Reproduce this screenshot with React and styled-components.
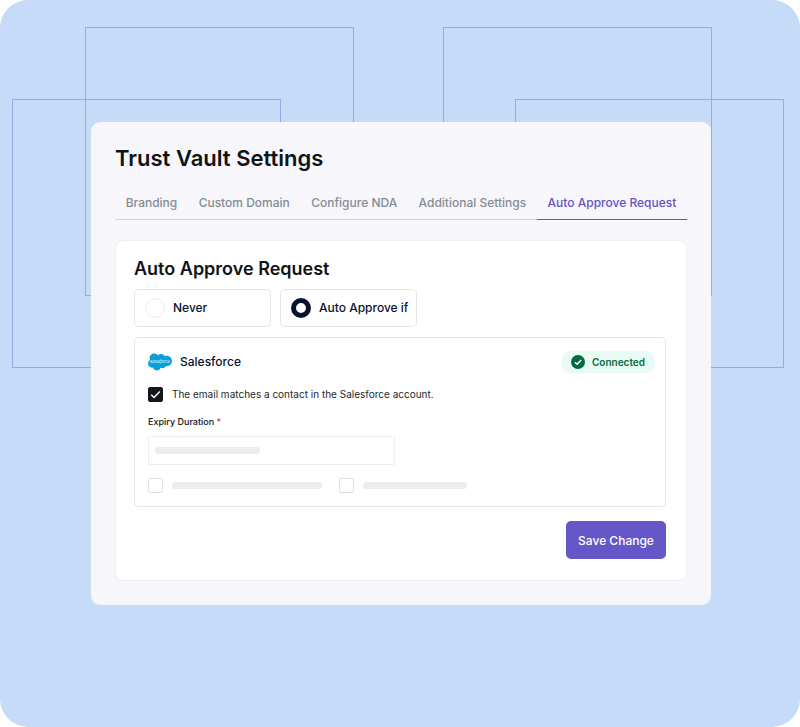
import React, { useState } from 'react';
import styled, { createGlobalStyle } from 'styled-components';
import { SiSalesforce } from 'react-icons/si';

const tabs = ['Branding', 'Custom Domain', 'Configure NDA', 'Additional Settings', 'Auto Approve Request']

const App = () => {
  const [activeTab, setActiveTab] = useState('Auto Approve Request')
  const [mode, setMode] = useState('auto')

  return (
    <Page>
      <GlobalStyle />
      <Backdrop viewBox="0 0 800 400" aria-hidden="true">
        <rect x="85.5" y="27.5" width="268" height="268" />
        <rect x="12.5" y="99.5" width="268" height="268" />
        <rect x="443.5" y="27.5" width="268" height="268" />
        <rect x="515.5" y="99.5" width="268" height="268" />
      </Backdrop>

      <Panel>
        <Title>Trust Vault Settings</Title>
        <Tabs role="tablist">
          {tabs.map((tab) => (
            <Tab
              key={tab}
              type="button"
              role="tab"
              aria-selected={tab === activeTab}
              $active={tab === activeTab}
              onClick={() => setActiveTab(tab)}
            >
              {tab}
            </Tab>
          ))}
        </Tabs>

        <Card>
          <Heading>Auto Approve Request</Heading>
          <Options>
            <Option>
              <Radio type="radio" name="mode" checked={mode === 'never'} onChange={() => setMode('never')} />
              Never
            </Option>
            <Option>
              <Radio type="radio" name="mode" checked={mode === 'auto'} onChange={() => setMode('auto')} />
              Auto Approve if
            </Option>
          </Options>

          <Integration>
            <IntegrationHead>
              <Brand>
                <Logo viewBox="0 0 24 24" aria-hidden="true">
                  <SiSalesforce size={24} color="#089fdc" />
                  <text x="12" y="13" textAnchor="middle">salesforce</text>
                </Logo>
                Salesforce
              </Brand>
              <Status>
                <svg width="14" height="14" viewBox="0 0 14 14" aria-hidden="true">
                  <circle cx="7" cy="7" r="7" fill="#046a41" />
                  <path d="M3.9 7.2 6.1 9.3 10.2 5.1" fill="none" stroke="#fff" strokeWidth="1.5" />
                </svg>
                Connected
              </Status>
            </IntegrationHead>

            <CheckRow>
              <Check defaultChecked />
              The email matches a contact in the Salesforce account.
            </CheckRow>

            <FieldLabel htmlFor="expiry">Expiry Duration <Required>*</Required></FieldLabel>
            <Field>
              <Input id="expiry" type="text" />
              <Bar $width={105} />
            </Field>

            <CheckGroup>
              <CheckRow>
                <Check label="First expiry option" />
                <Bar $width={150} />
              </CheckRow>
              <CheckRow>
                <Check label="Second expiry option" />
                <Bar $width={104} />
              </CheckRow>
            </CheckGroup>
          </Integration>

          <SaveButton type="button">Save Change</SaveButton>
        </Card>
      </Panel>
    </Page>
  )
}

const Check = ({ label, defaultChecked }) => (
  <CheckWrap>
    <Checkbox type="checkbox" aria-label={label} defaultChecked={defaultChecked} />
    <svg width="15" height="15" viewBox="0 0 15 15" aria-hidden="true">
      <path d="M3.2 7.8 6 10.6 11.8 4.4" fill="none" stroke="#fff" strokeWidth="1.4" />
    </svg>
  </CheckWrap>
)

const GlobalStyle = createGlobalStyle`
  *{
    box-sizing: border-box;
  }
  body{
    margin: 0;
    background: white;
    font-family: Inter, "Liberation Sans", sans-serif;
  }
  button, input{
    font-family: inherit;
  }
`
const Page = styled.main`
  position: relative;
  min-height: 100vh;
  padding: 122px 89px 122px 91px;
  border-radius: 28px;
  background: #c5dbf8;
`
const Backdrop = styled.svg`
  position: absolute;
  top: 0;
  left: 0;
  width: 100%;

  rect{
    fill: none;
    stroke: #94abe3;
  }
`
const Panel = styled.section`
  position: relative;
  padding: 20px 24px 24px;
  border-radius: 9px;
  background: #f6f6fb;
`
const Title = styled.h1`
  margin: 0;
  font-size: 22px;
  line-height: 32px;
  font-weight: 600;
  color: #101316;
`
const Tabs = styled.div`
  display: flex;
  margin-top: 12px;
`
const Tab = styled.button`
  flex: 1 1 auto;
  height: 34px;
  padding: 0;
  border: none;
  border-bottom: 1px solid ${(p) => (p.$active ? '#6657c9' : '#cdd5df')};
  background: none;
  color: ${(p) => (p.$active ? '#6552c4' : '#868b94')};
  font-size: 12px;
  font-weight: 450;
  white-space: nowrap;
  cursor: pointer;
`
const Card = styled.div`
  display: flex;
  flex-direction: column;
  margin-top: 20px;
  padding: 16px 20px 21px 18px;
  border: 1px solid #eeeef4;
  border-radius: 8px;
  background: white;
`
const Heading = styled.h2`
  margin: 0;
  font-size: 18px;
  line-height: 24px;
  font-weight: 600;
  color: #101316;
`
const Options = styled.div`
  display: flex;
  gap: 9px;
  margin-top: 8px;
`
const Option = styled.label`
  display: flex;
  align-items: center;
  gap: 8px;
  width: 137px;
  height: 38px;
  padding: 0 9px 0 10px;
  border: 1px solid #e4e5e9;
  border-radius: 5px;
  font-size: 12px;
  line-height: 16px;
  font-weight: 450;
  color: #06122f;
  white-space: nowrap;
  cursor: pointer;
`
const Radio = styled.input`
  appearance: none;
  flex: none;
  width: 20px;
  height: 20px;
  margin: 0;
  border: 1px solid #ececef;
  border-radius: 50%;
  background: white;

  &:checked{
    border: 5px solid #06122f;
  }
`
const Integration = styled.div`
  margin-top: 10px;
  padding: 12px 10px 13px 13px;
  border: 1px solid #e4e5e9;
  border-radius: 5px;
`
const IntegrationHead = styled.div`
  display: flex;
  align-items: center;
  justify-content: space-between;
`
const Brand = styled.div`
  display: flex;
  align-items: center;
  gap: 8px;
  font-size: 12px;
  line-height: 16px;
  font-weight: 450;
  color: #06122f;
`
const Logo = styled.svg`
  width: 24px;
  height: 24px;

  text{
    fill: white;
    font-size: 4px;
    font-style: italic;
  }
`
const Status = styled.div`
  display: flex;
  align-items: center;
  gap: 7px;
  height: 22px;
  padding: 0 10px;
  border-radius: 11px;
  background: #e8fbf4;
  font-size: 10px;
  font-weight: 600;
  color: #046a41;
`
const CheckRow = styled.label`
  display: flex;
  align-items: center;
  gap: 9px;
  margin-top: 12px;
  font-size: 10px;
  line-height: 16px;
  color: #24272b;
`
const CheckWrap = styled.span`
  display: grid;
  flex: none;

  > *{
    grid-area: 1 / 1;
  }
  svg{
    pointer-events: none;
  }
`
const Checkbox = styled.input`
  appearance: none;
  width: 15px;
  height: 15px;
  margin: 0;
  border: 1px solid #dfe0e3;
  border-radius: 2px;
  background: white;

  &:checked{
    border-color: #14161a;
    background: #14161a;
  }
`
const FieldLabel = styled.label`
  display: block;
  margin-top: 12px;
  font-size: 9px;
  line-height: 16px;
  font-weight: 500;
  color: #101316;
`
const Required = styled.span`
  color: #e0392b;
`
const Field = styled.div`
  display: grid;
  align-items: center;
  width: 247px;
  max-width: 100%;
  margin-top: 6px;

  > *{
    grid-area: 1 / 1;
  }
  > span{
    margin-left: 7px;
    pointer-events: none;
  }
`
const Input = styled.input`
  width: 100%;
  height: 29px;
  padding: 0 7px;
  border: 1px solid #eceef0;
  border-radius: 2px;
  background: white;
`
const Bar = styled.span`
  width: ${(p) => p.$width}px;
  height: 7px;
  border-radius: 4px;
  background: #ebeced;
`
const CheckGroup = styled.div`
  display: flex;
  gap: 17px;
  margin-top: 1px;
`
const SaveButton = styled.button`
  align-self: flex-end;
  width: 100px;
  height: 38px;
  margin-top: 14px;
  padding: 0;
  border: none;
  border-radius: 5px;
  background: #6657c9;
  color: white;
  font-size: 12px;
  font-weight: 450;
  cursor: pointer;
`

export default App
